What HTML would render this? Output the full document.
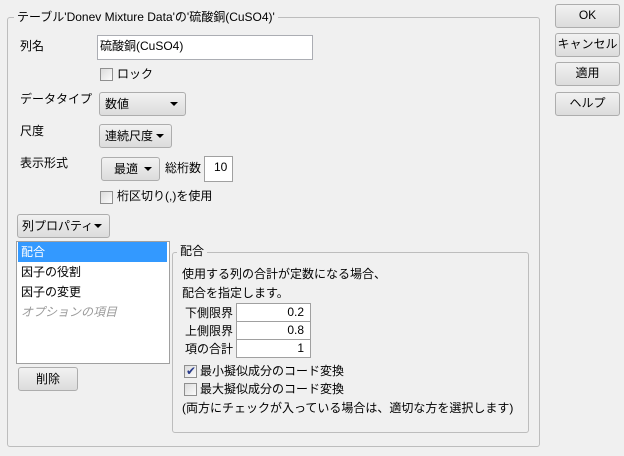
<!DOCTYPE html>
<html><head><meta charset="utf-8"><style>
*{box-sizing:border-box;margin:0;padding:0}
body{width:624px;height:456px;background:#f0f0f0;font-family:"Liberation Sans","Noto Sans CJK JP",sans-serif;font-size:12px;color:#000;position:relative;overflow:hidden}
.a{position:absolute;white-space:nowrap;line-height:16px}
.btn{position:absolute;border:1px solid #adadad;border-radius:3px;background:linear-gradient(#f2f2f2,#dcdcdc);text-align:center;line-height:21px}
.dd{position:absolute;border:1px solid #adadad;border-radius:3px;background:linear-gradient(#f2f2f2,#dcdcdc);line-height:22px;padding-left:5px}
.dd:after{content:"";position:absolute;right:7px;top:9px;border-left:4px solid transparent;border-right:4px solid transparent;border-top:4px solid #000}
.grp{position:absolute;border:1px solid #bdbdbd;border-radius:3px}
.cb{position:absolute;width:13px;height:13px;border:1px solid #8f8f8f;background:linear-gradient(135deg,#dcdcdc,#fbfbfb)}
.inp{position:absolute;background:#fff;border:1px solid #abadb3}
.cell{position:absolute;background:#fff;border:1px solid #a0a0a0;text-align:right;padding-right:6px;line-height:17px}
</style></head><body>
<div class="grp" style="left:7px;top:17px;width:533px;height:430px"></div>
<div class="a" style="left:14px;top:9px;background:#f0f0f0;padding:0 3px">テーブル'Donev Mixture Data'の'硫酸銅(CuSO4)'</div>

<div class="a" style="left:20px;top:38px">列名</div>
<div class="inp" style="left:97px;top:35px;width:216px;height:25px"><span class="a" style="left:2px;top:2px">硫酸銅(CuSO4)</span></div>
<div class="cb" style="left:100px;top:68px"></div>
<div class="a" style="left:117px;top:66px">ロック</div>

<div class="a" style="left:20px;top:91px">データタイプ</div>
<div class="dd" style="left:99px;top:92px;width:87px;height:24px">数値</div>
<div class="a" style="left:20px;top:123px">尺度</div>
<div class="dd" style="left:99px;top:124px;width:73px;height:24px">連続尺度</div>
<div class="a" style="left:20px;top:155px">表示形式</div>
<div class="dd" style="left:101px;top:157px;width:59px;height:24px;padding-left:12px">最適</div>
<div class="a" style="left:165px;top:160px">総桁数</div>
<div class="inp" style="left:204px;top:156px;width:29px;height:26px;border-color:#a0a0a0"><span class="a" style="left:9px;top:2px">10</span></div>
<div class="cb" style="left:100px;top:191px"></div>
<div class="a" style="left:117px;top:188px">桁区切り(,)を使用</div>

<div class="dd" style="left:17px;top:214px;width:93px;height:24px;padding-left:4px">列プロパティ</div>

<div style="position:absolute;left:16px;top:241px;width:154px;height:123px;background:#fff;border:1px solid #a0a0a0"></div>
<div style="position:absolute;left:18px;top:242px;width:149px;height:20px;background:#3399ff"></div>
<div class="a" style="left:21px;top:244px;color:#fff">配合</div>
<div class="a" style="left:21px;top:264px">因子の役割</div>
<div class="a" style="left:21px;top:284px">因子の変更</div>
<div class="a" style="left:21px;top:304px;color:#9a9a9a;font-style:italic">オプションの項目</div>
<div class="btn" style="left:18px;top:367px;width:60px;height:24px;line-height:22px">削除</div>

<div class="grp" style="left:172px;top:252px;width:357px;height:181px"></div>
<div class="a" style="left:177px;top:243px;background:#f0f0f0;padding:0 3px">配合</div>
<div class="a" style="left:182px;top:266px">使用する列の合計が定数になる場合、</div>
<div class="a" style="left:182px;top:285px">配合を指定します。</div>
<div class="a" style="left:185px;top:305px">下側限界</div>
<div class="a" style="left:185px;top:323px">上側限界</div>
<div class="a" style="left:185px;top:341px">項の合計</div>
<div class="cell" style="left:236px;top:303px;width:75px;height:19px">0.2</div>
<div class="cell" style="left:236px;top:321px;width:75px;height:19px">0.8</div>
<div class="cell" style="left:236px;top:339px;width:75px;height:19px">1</div>
<div class="cb" style="left:184px;top:365px"><span class="a" style="left:1px;top:-3px;color:#283a8a;font-size:12px">✔</span></div>
<div class="a" style="left:200px;top:363px">最小擬似成分のコード変換</div>
<div class="cb" style="left:184px;top:383px"></div>
<div class="a" style="left:200px;top:381px">最大擬似成分のコード変換</div>
<div class="a" style="left:182px;top:400px">(両方にチェックが入っている場合は、適切な方を選択します)</div>

<div class="btn" style="left:555px;top:4px;width:65px;height:24px">OK</div>
<div class="btn" style="left:555px;top:33px;width:65px;height:24px">キャンセル</div>
<div class="btn" style="left:555px;top:62px;width:65px;height:24px">適用</div>
<div class="btn" style="left:555px;top:92px;width:65px;height:24px">ヘルプ</div>
</body></html>
